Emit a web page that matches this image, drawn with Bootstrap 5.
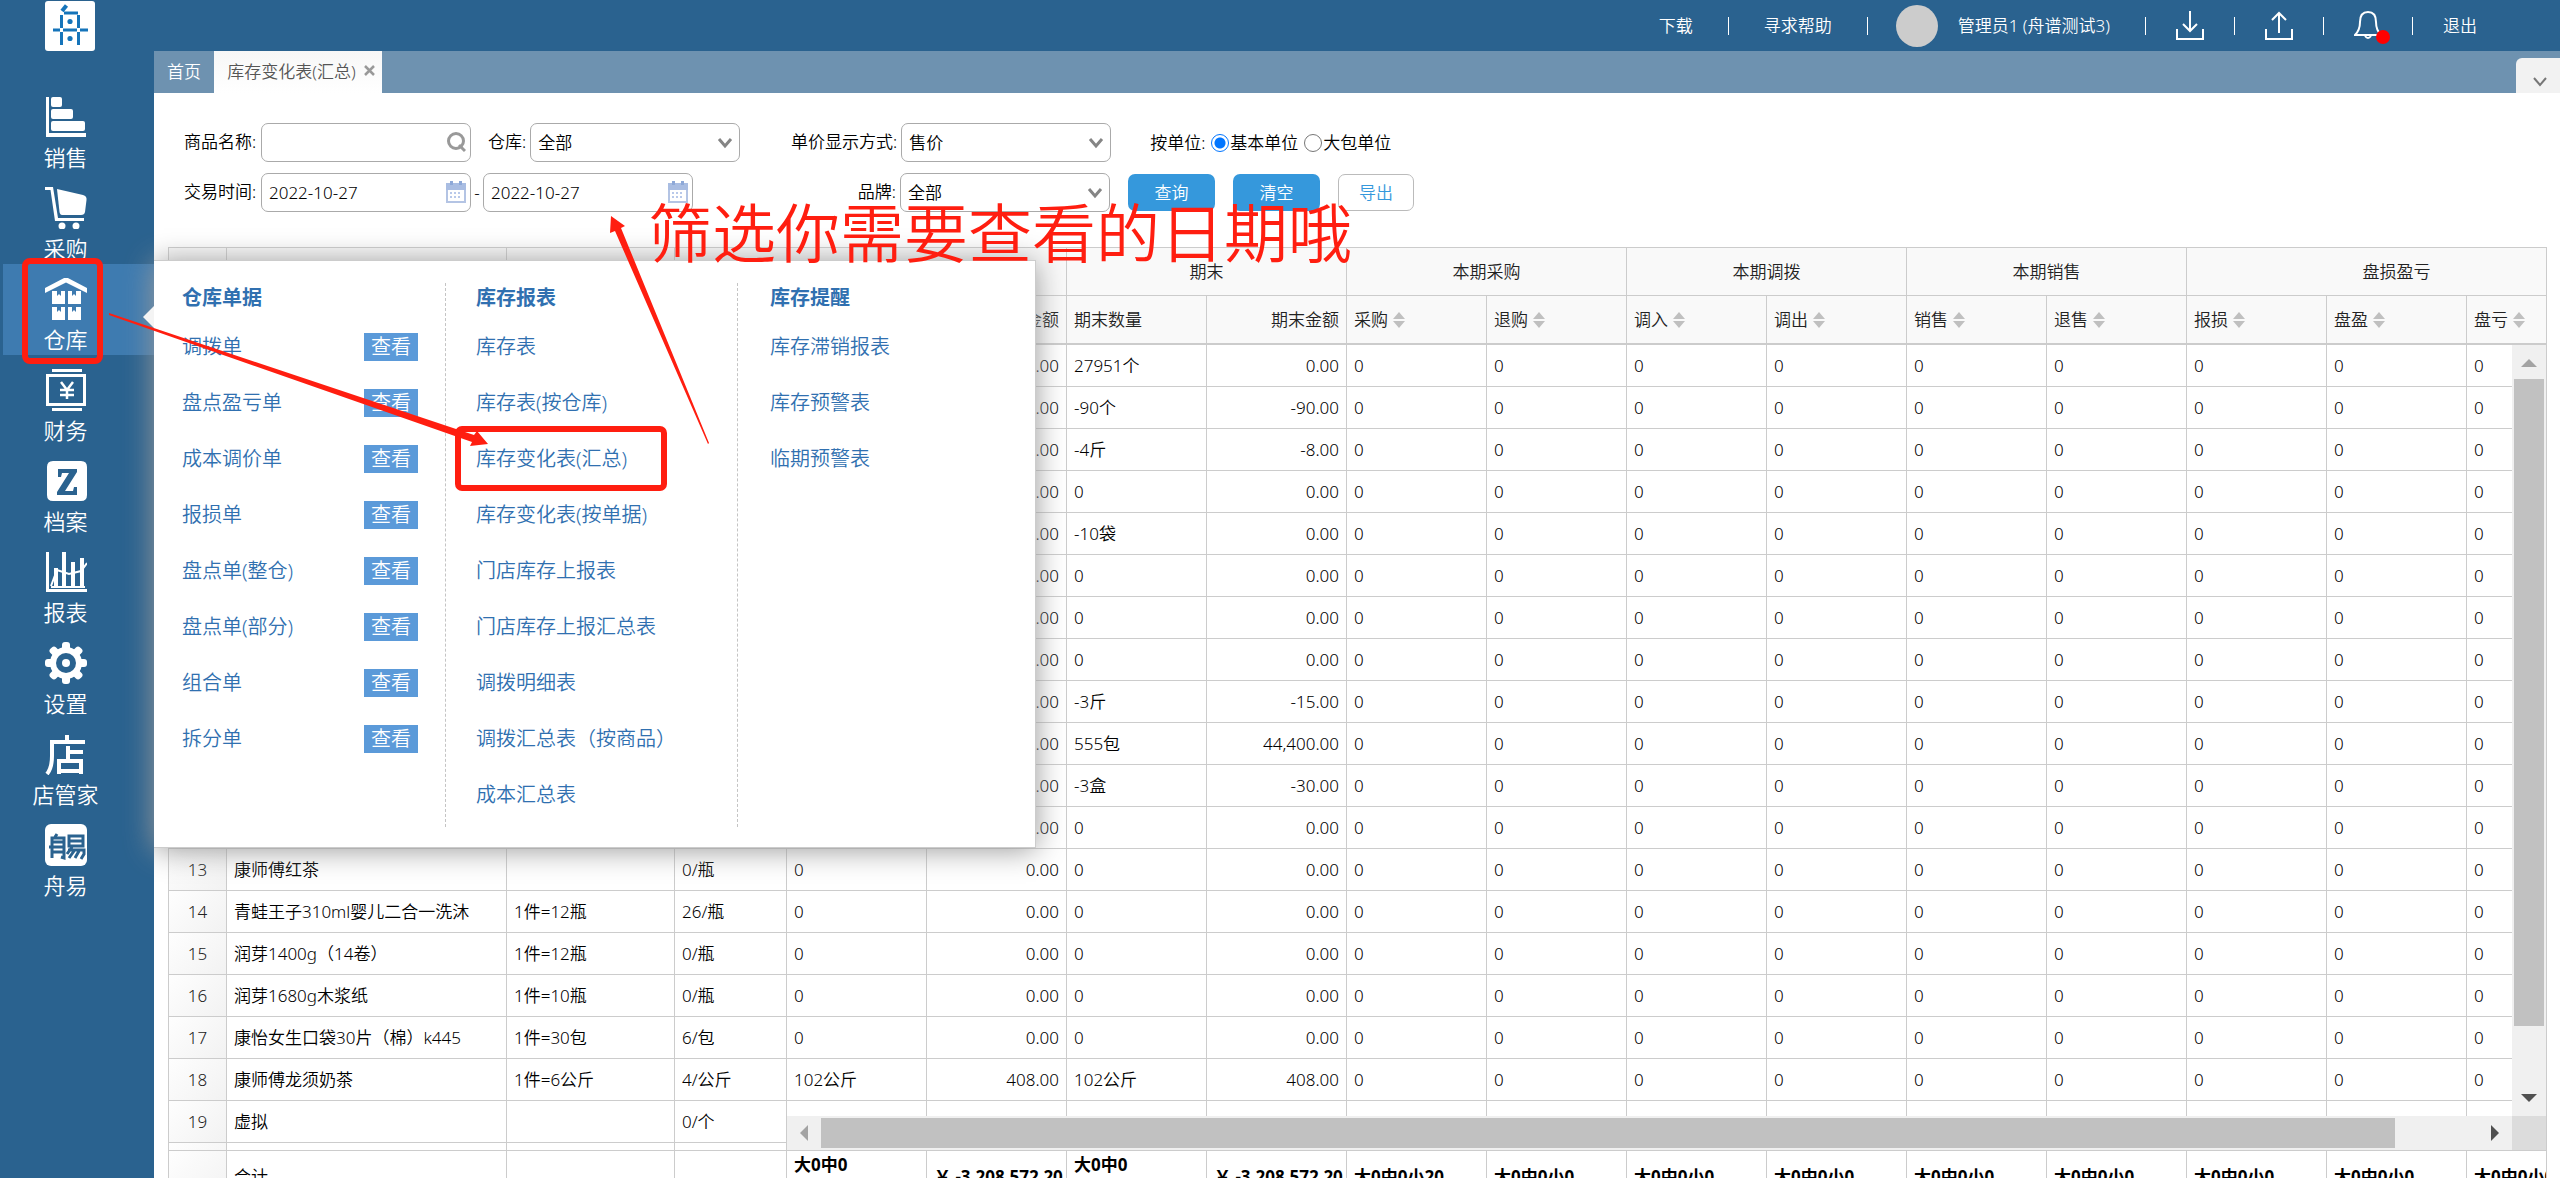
<!DOCTYPE html>
<html lang="zh-CN">
<head>
<meta charset="utf-8">
<meta name="viewport" content="width=device-width, initial-scale=1">
<title>库存变化表(汇总)</title>
<link href="https://cdn.jsdelivr.net/npm/bootstrap@5.3.0/dist/css/bootstrap.min.css" rel="stylesheet">
<style>
  :root { --navy: #2a628f; --line: #ccc; --link: #3070b0; --mark-red: #ff1e10; }
  body { font-family: "Noto Sans", "Noto Sans CJK SC", sans-serif; font-size: 17px; line-height: 24px; font-weight: 350; color: #000; background: #fff; }
  a { text-decoration: none; }

  .side { width: 154px; background: var(--navy); }
  .side-logo { height: 82px; padding: 1px 0 0 45px; }
  .side-item { height: 91px; margin-left: 3px; padding: 14px 26px 0 0; color: #fff; font-size: 22px; line-height: 30px; }
  .side-item.active { background: #3e7bb0; }
  .side-item svg { width: 42px; height: 42px; margin-bottom: 4px; fill: #fff; }

  .topbar { height: 51px; background: var(--navy); padding-right: 83px; }
  .topbar a { color: #fff; }
  .topbar .sep { width: 1px; height: 18px; background: #fff; margin: 0 30px; }
  .topbar .sep-wide { margin-left: 35px; }
  .topbar .sep-even { margin: 0 35px; }
  .topbar .avatar { width: 42px; height: 42px; background: #ccc; margin: 0 20px 0 -2px; }
  .topbar svg { display: block; fill: none; stroke: #fff; stroke-width: 2; }
  .bell-dot { width: 14px; height: 14px; background: #f00; right: -8px; bottom: -3px; }

  .tabbar { height: 42px; background: #6e92b0; }
  .tab-home { width: 60px; color: #fff; }
  .tab-now { width: 168px; padding-left: 6px; color: #555; background: linear-gradient(#f7f7f7, #fff); }
  .tab-more { width: 44px; height: 35px; background: #f2f2f2; border: 0; border-radius: 6px 0 0 0; padding: 12px 0 0 4px; }

  .filters { padding: 30px 0 0 30px; }
  .filters .line { height: 39px; margin-bottom: 11px; }
  .filters label { line-height: 24px; padding-bottom: 2px; margin-right: 4px; }
  .box { width: 210px; height: 39px; padding: 0 7px; font-size: 17px; font-weight: 350; color: #000; background-color: #fff; border: 1px solid #aaa; border-radius: 7px; }
  select.box { background-image: url("data:image/svg+xml,%3Csvg xmlns='http://www.w3.org/2000/svg' width='16' height='12' fill='none' stroke='%23858585' stroke-width='3'%3E%3Cpath d='M2 2l6 7 6-7'/%3E%3C/svg%3E"); background-size: 16px 12px; background-position: right 6px center; }
  .box-icon { right: 5px; top: 8px; pointer-events: none; }
  .filters .lab-first { width: 73px; }
  .lab-a { margin-left: 17px; }
  .lab-price { width: 157px; text-align: right; }
  .lab-brand { width: 203px; text-align: right; }
  .dash { width: 12px; text-align: center; }
  .unit-set { margin-left: 39px; }
  .unit-set input { width: 18px; height: 18px; margin: 0 1px 0 2px; }
  .unit-set .form-check-input { border-color: #777; }
  .unit-set .form-check-input:checked { background-color: #fff; border-color: #0075ff; background-image: radial-gradient(circle, #0075ff 5px, #fff 6px); }
  .cmd { height: 37px; font-size: 17px; font-weight: 350; padding: 0; border-radius: 7px; width: 87px; margin-left: 18px; }
  .cmd-fill, .cmd-fill:hover { background: #3598dc; color: #fff; }
  .cmd-line { width: 76px; background: #fff; color: #3598dc; border: 1px solid #bbb; }

  .grid { margin: 35px 13px 0 14px; border: 1px solid var(--line); border-bottom: 0; min-height: 0; }
  .grid table { table-layout: fixed; width: 2438px; border-collapse: separate; border-spacing: 0; }
  .grid th, .grid td { border: solid var(--line); border-width: 0 1px 1px 0; padding: 0 7px; white-space: nowrap; overflow: hidden; font-weight: 350; }
  .grid td { height: 42px; }
  .grid thead th { background: #f9f9f9; color: #222; }
  .grid thead tr:first-child th { height: 48px; }
  .grid thead tr:last-child th { height: 49px; border-bottom-width: 2px; }
  .grid tbody th, .grid tfoot th { text-align: center; background: linear-gradient(135deg, #fefefe, #f2f2f2); color: #222; }
  .sums { flex: 0 0 28px; border-top: 1px solid var(--line); }
  .sums td { height: 52px; font-weight: 700; }
  .sums td.plain { font-weight: 350; }
  .sort { width: 12px; height: 16px; margin-left: 5px; fill: #c0c0c0; vertical-align: -2px; }

  .bar-v { top: 0; right: 0; bottom: 34px; width: 34px; background: #f0f0f0; }
  .bar-h { left: 618px; right: 34px; bottom: 0; height: 34px; background: #f0f0f0; }
  .bar-v .thumb { background: #c1c1c1; margin: 0 2px; height: 92%; }
  .bar-h .thumb { background: #c1c1c1; margin: 2px 0; width: 95%; }
  .bar-corner { right: 0; bottom: 0; width: 34px; height: 34px; background: #dcdcdc; }
  .bar-v svg, .bar-h svg { flex: none; width: 34px; height: 34px; }

  .flyout { left: 154px; top: 260px; width: 882px; height: 588px; padding: 22px 0 20px; background: #fff; border: 1px solid #ccc; border-left: 0; box-shadow: 0 2px 28px #999; font-size: 20px; z-index: 5; }
  .flyout::before { content: ""; position: absolute; left: -11px; top: 45px; border: solid transparent; border-width: 11px 11px 11px 0; border-right-color: #f4f4f4; }
  .flyout-col { width: 292px; padding: 0 27px 0 28px; border-right: 1px dashed #c4c4c4; }
  .flyout-col + .flyout-col { padding-left: 30px; }
  .flyout-col:last-child { border: 0; padding-left: 32px; }
  .flyout-col h2 { font-size: 20px; line-height: 30px; font-weight: 700; color: var(--link); margin: 0 0 6px; }
  .flyout-col li { height: 56px; }
  .flyout-col li a { color: var(--link); }
  .flyout-col li .view { width: 54px; line-height: 28px; color: #fff; background: #5b9ad9; text-align: center; }

  .notes { inset: 0; z-index: 6; pointer-events: none; }
  .notes svg { fill: var(--mark-red); }
  .note-text { left: 648px; top: 193px; font-size: 64px; line-height: 80px; color: var(--mark-red); white-space: nowrap; }
</style>
<script src="https://cdn.jsdelivr.net/npm/bootstrap@5.3.0/dist/js/bootstrap.bundle.min.js"></script>
</head>
<body class="vh-100 overflow-hidden d-flex position-relative">

<nav class="side flex-shrink-0">
  <div class="side-logo">
    <svg width="50" height="50" viewBox="0 0 50 50"><rect width="50" height="50" rx="3" fill="#fff"/>
      <g stroke="#1574ba" stroke-width="3" fill="none"><path d="M21.500 4.500l-4.500 5.500" stroke-width="4"/><path d="M19 12h14"/><path d="M16.500 14v13M33.500 14v13M16.500 31v13M33.500 31v13"/><path d="M8 29h7M18 29h14M35 29h8"/></g>
      <circle cx="25" cy="20.500" r="2.600" fill="#1574ba"/><circle cx="25" cy="37.500" r="2.600" fill="#1574ba"/></svg>
  </div>
  <a href="#" class="side-item d-flex flex-column align-items-center"><svg viewBox="0 0 42 42"><path d="M1 1h3v36h37v4H1z"/><rect x="6" y="1" width="11" height="10" rx="2"/><rect x="6" y="13" width="22" height="10" rx="2"/><rect x="6" y="25" width="34" height="10" rx="2"/></svg>销售</a>
  <a href="#" class="side-item d-flex flex-column align-items-center"><svg viewBox="0 0 42 42"><path d="M0 0h8l5 31h26v3H10L5.500 3H0z"/><path d="M12 2l26 6q4 1 3.500 5l-1.500 12q-.5 3-4 3H17q-2 0-2.500-3z"/><circle cx="17" cy="39" r="3.500"/><circle cx="31" cy="39" r="3.500"/></svg>采购</a>
  <a href="#" class="side-item active d-flex flex-column align-items-center"><svg viewBox="0 0 42 42"><path d="M21-1l21 11v5L21 4.500 0 15v-5z"/><path d="M7 13h5v5l2-2 2 2v-5h4v13H7zM23 13h4v5l2-2 2 2v-5h5v13H23zM7 29h5v5l2-2 2 2v-5h4v14H7zM23 29h4v5l2-2 2 2v-5h5v14H23z"/></svg>仓库</a>
  <a href="#" class="side-item d-flex flex-column align-items-center"><svg viewBox="0 0 42 42"><path d="M7 0h30v3H7zM7 39h30v3H7z"/><path d="M1 5h40v32H1zM4 8v26h34V8z" fill-rule="evenodd"/><path d="M16 13l6 8 6-8M15 21h14M15 26h14M22 21v9" fill="none" stroke="#fff" stroke-width="2.500"/></svg>财务</a>
  <a href="#" class="side-item d-flex flex-column align-items-center"><svg viewBox="0 0 42 42"><path fill-rule="evenodd" d="M8 1h28q6 0 6 6v28q0 6-6 6H8q-6 0-6-6V7q0-6 6-6zM13 9v8h3l1-4h7L12 32v3h20v-8h-3l-1 4h-8L32 12V9z"/></svg>档案</a>
  <a href="#" class="side-item d-flex flex-column align-items-center"><svg viewBox="0 0 42 42"><path d="M1 1h3v37h38v3H1z"/><path d="M9 17h4v18H9zM17 1h4v34h-4zM26 11h4v24h-4zM35 7h4v28h-4z"/><path d="M6 35l6-16 12 4 12-3 6-8M6 36h34" fill="none" stroke="#fff" stroke-width="2"/></svg>报表</a>
  <a href="#" class="side-item d-flex flex-column align-items-center"><svg viewBox="0 0 42 42"><rect x="17" y="0" width="8" height="42" rx="3"/><rect x="17" y="0" width="8" height="42" rx="3" transform="rotate(45 21 21)"/><rect x="17" y="0" width="8" height="42" rx="3" transform="rotate(90 21 21)"/><rect x="17" y="0" width="8" height="42" rx="3" transform="rotate(135 21 21)"/><circle cx="21" cy="21" r="16"/><circle cx="21" cy="21" r="10" fill="#2a628f"/><circle cx="21" cy="21" r="4"/></svg>设置</a>
  <a href="#" class="side-item d-flex flex-column align-items-center"><svg viewBox="0 0 42 42"><g fill="none" stroke="#fff" stroke-width="4"><path d="M22 2v6M5 9h35M7 9v14q0 12-5 18M23 13v14M23 19h15M14 41V28h22v13M14 38h22"/></g></svg>店管家</a>
  <a href="#" class="side-item d-flex flex-column align-items-center"><svg viewBox="0 0 42 42"><rect width="42" height="42" rx="6"/><g fill="none" stroke="#2a628f" stroke-width="3"><path d="M12 10l-2 3M7 34V14h12v20l-3-1M4 23h16M7 18h12M7 28h12M24 12h14v10H24zM24 17h14M23 26h16v4l-3 5M27 23l-5 7M29 27l-5 7M34 27l-4 7"/></g></svg>舟易</a>
</nav>

<div class="flex-grow-1 d-flex flex-column" style="min-width:0">
  <header class="topbar flex-shrink-0 d-flex align-items-center justify-content-end">
    <a href="#">下载</a><span class="sep sep-even"></span>
    <a href="#">寻求帮助</a><span class="sep sep-wide"></span>
    <span class="avatar rounded-circle"></span><a href="#">管理员1 (舟谱测试3)</a><span class="sep sep-wide"></span>
    <a href="#" aria-label="导入"><svg width="28" height="30" viewBox="0 0 28 30"><path d="M14 0v20M7 13l7 7 7-7M1 18v10h26V18"/></svg></a><span class="sep"></span>
    <a href="#" aria-label="上传"><svg width="28" height="30" viewBox="0 0 28 30"><path d="M14 22V2M7 9l7-7 7 7M1 18v10h26V18"/></svg></a><span class="sep"></span>
    <a href="#" class="position-relative" aria-label="通知"><svg width="28" height="30" viewBox="0 0 28 30"><path d="M14 1c-6 0-8 5-8 10 0 7-2 10-5 13h26c-3-3-5-6-5-13 0-5-2-10-8-10zM11 25q3 4 6 0"/></svg><span class="bell-dot position-absolute rounded-circle"></span></a><span class="sep"></span>
    <a href="#">退出</a>
  </header>

  <div class="tabbar flex-shrink-0 d-flex">
    <a href="#" class="tab-home d-flex align-items-center justify-content-center">首页</a>
    <a href="#" class="tab-now d-flex align-items-center justify-content-center">库存变化表(汇总)
      <svg class="ms-2 mb-1" width="11" height="11" viewBox="0 0 11 11" fill="none" stroke="#999" stroke-width="2.500"><path d="M1 1l9 9M10 1l-9 9"/></svg></a>
    <button class="tab-more ms-auto mt-auto" aria-label="更多"><svg class="d-block mx-auto" width="16" height="12" fill="none" stroke="#777" stroke-width="2"><path d="M2 2l6 7 6-7"/></svg></button>
  </div>

  <form class="filters flex-shrink-0">
    <div class="line d-flex align-items-center">
      <label for="goods" class="lab-first">商品名称:</label>
      <div class="position-relative"><input id="goods" type="text" class="box"><svg class="box-icon position-absolute" width="20" height="22" fill="none" stroke="#999" stroke-width="3"><circle cx="10" cy="10" r="7.500"/><path d="M13 14l6 6"/></svg></div>
      <label for="store" class="lab-a">仓库:</label>
      <select id="store" class="form-select box"><option>全部</option></select>
      <label for="price" class="lab-price">单价显示方式:</label>
      <select id="price" class="form-select box"><option>售价</option></select>
      <div class="unit-set d-flex align-items-center">
        <span class="me-1">按单位:</span>
        <input class="form-check-input" type="radio" name="unit" id="u1" checked><label for="u1" class="pb-0">基本单位</label>
        <input class="form-check-input" type="radio" name="unit" id="u2"><label for="u2" class="pb-0">大包单位</label>
      </div>
    </div>
    <div class="line d-flex align-items-center mb-0">
      <label for="from" class="lab-first">交易时间:</label>
      <div class="position-relative"><input id="from" type="text" class="box" value="2022-10-27"><svg class="box-icon position-absolute" width="20" height="22"><use href="#cal"/></svg></div>
      <span class="dash">-</span>
      <div class="position-relative"><input aria-label="结束日期" type="text" class="box" value="2022-10-27"><svg class="box-icon position-absolute" width="20" height="22"><use href="#cal"/></svg></div>
      <label for="brand" class="lab-brand">品牌:</label>
      <select id="brand" class="form-select box"><option>全部</option></select>
      <button type="button" class="btn cmd cmd-fill">查询</button>
      <button type="button" class="btn cmd cmd-fill">清空</button>
      <button type="button" class="btn cmd cmd-line">导出</button>
    </div>
  </form>

  <div class="grid flex-grow-1 d-flex flex-column overflow-hidden">
    <div class="overflow-hidden flex-shrink-0"><table id="head"></table></div>
    <div class="overflow-hidden flex-grow-1 position-relative" style="min-height:0">
      <table id="rows"></table>
      <div class="bar-v position-absolute d-flex flex-column"><svg viewBox="0 0 34 34"><path d="M17 14l8 8H9z" fill="#a3a3a3"/></svg><div class="flex-grow-1"><div class="thumb"></div></div><svg viewBox="0 0 34 34"><path d="M17 20l8-8H9z" fill="#505050"/></svg></div>
      <div class="bar-h position-absolute d-flex"><svg viewBox="0 0 34 34"><path d="M13 17l8-8v16z" fill="#a3a3a3"/></svg><div class="flex-grow-1 d-flex"><div class="thumb"></div></div><svg viewBox="0 0 34 34"><path d="M21 17l-8-8v16z" fill="#505050"/></svg></div>
      <div class="bar-corner position-absolute"></div>
    </div>
    <div class="sums overflow-hidden"><table id="foot"></table></div>
  </div>
</div>

<div class="flyout position-absolute d-flex" id="flyout"></div>

<div class="notes position-absolute">
  <svg class="position-absolute top-0 start-0" width="1100" height="520">
    <g fill="none" stroke="#ff1e10" stroke-width="6"><rect x="25" y="261" width="75" height="100" rx="5"/><rect x="458" y="429" width="206" height="59" rx="4"/></g>
    <path d="M109 313L474 435L477 431L488 444L470 446L472 442L109 315z"/>
    <path d="M708 444L615 231L610 233L611 216L625 226L621 228L709 443z"/>
  </svg>
  <div class="note-text position-absolute">筛选你需要查看的日期哦</div>
</div>

<svg class="d-none"><symbol id="cal" viewBox="0 0 20 22"><path d="M1 3h18v18H1z" fill="#fff" stroke="#b4c4e4" stroke-width="2"/><path d="M0 2h20v7H0z" fill="#a9bde2"/><path d="M4 0h3v4H4zM13 0h3v4h-3z" fill="#8ea9d8"/><path d="M4 12h12M4 16h12" stroke="#b9c9ea" stroke-width="2" stroke-dasharray="2 2"/></symbol></svg>

<script>
  // Column widths: index, name, pack, price, then the figure columns
  const cols = '<colgroup>' + [58, 280, 168, 112].concat(Array(13).fill(140)).map(w => `<col style="width:${w}px">`).join('') + '</colgroup>';
  const sort = '<svg class="sort" viewBox="0 0 12 16"><path d="M6 0l6 7H0zM6 16l6-7H0z"/></svg>';
  const groups = [['', 2], ['期末', 2], ['本期采购', 2], ['本期调拨', 2], ['本期销售', 2], ['盘损盈亏', 3]];
  const moves = ['采购', '退购', '调入', '调出', '销售', '退售', '报损', '盘盈', '盘亏'];
  head.innerHTML = cols + '<thead><tr><th></th><th></th><th></th><th></th>' +
    groups.map(g => `<th colspan="${g[1]}" class="text-center">${g[0]}</th>`).join('') + '</tr><tr><th></th><th></th><th></th><th></th>' +
    '<th></th><th class="text-end">期初金额</th><th>期末数量</th><th class="text-end">期末金额</th>' +
    moves.map(m => `<th>${m}${sort}</th>`).join('') + '</tr></thead>';

  // name, pack, price, opening qty, opening sum, closing qty, closing sum
  const e = (q, s) => ['', '', '', '', '0.00', q, s];
  const data = [
    e('27951个', '0.00'), e('-90个', '-90.00'), e('-4斤', '-8.00'), e('0', '0.00'), e('-10袋', '0.00'), e('0', '0.00'),
    e('0', '0.00'), e('0', '0.00'), e('-3斤', '-15.00'), e('555包', '44,400.00'), e('-3盒', '-30.00'), e('0', '0.00'),
    ['康师傅红茶', '', '0/瓶', '0', '0.00', '0', '0.00'],
    ['青蛙王子310ml婴儿二合一洗沐', '1件=12瓶', '26/瓶', '0', '0.00', '0', '0.00'],
    ['润芽1400g（14卷）', '1件=12瓶', '0/瓶', '0', '0.00', '0', '0.00'],
    ['润芽1680g木浆纸', '1件=10瓶', '0/瓶', '0', '0.00', '0', '0.00'],
    ['康怡女生口袋30片（棉）k445', '1件=30包', '6/包', '0', '0.00', '0', '0.00'],
    ['康师傅龙须奶茶', '1件=6公斤', '4/公斤', '102公斤', '408.00', '102公斤', '408.00'],
    ['虚拟', '', '0/个', '0', '0.00', '0', '0.00']
  ];
  rows.innerHTML = cols + '<tbody>' + data.map((r, i) => `<tr><th>${i < 12 ? '' : i + 1}</th>` +
    r.map((v, k) => `<td${k === 4 || k === 6 ? ' class="text-end"' : ''}>${v}</td>`).join('') + '<td>0</td>'.repeat(9) + '</tr>').join('') +
    '<tr><th></th>' + '<td></td>'.repeat(16) + '</tr></tbody>';

  const sum = '<td>大0中0<br>小0</td><td>￥ -3,208,572.20</td>';
  foot.innerHTML = cols + '<tfoot><tr><th></th><td class="plain">合计</td><td></td><td></td>' + sum + sum +
    '<td>大0中0小20</td>' + '<td>大0中0小0</td>'.repeat(8) + '</tr></tfoot>';

  const menu = [
    ['仓库单据', ['调拨单', '盘点盈亏单', '成本调价单', '报损单', '盘点单(整仓)', '盘点单(部分)', '组合单', '拆分单'], true],
    ['库存报表', ['库存表', '库存表(按仓库)', '库存变化表(汇总)', '库存变化表(按单据)', '门店库存上报表', '门店库存上报汇总表', '调拨明细表', '调拨汇总表（按商品）', '成本汇总表']],
    ['库存提醒', ['库存滞销报表', '库存预警表', '临期预警表']]
  ];
  flyout.innerHTML = menu.map(m => `<div class="flyout-col"><h2>${m[0]}</h2><ul class="list-unstyled m-0">` +
    m[1].map(t => `<li class="d-flex align-items-center justify-content-between"><a href="#">${t}</a>${m[2] ? '<a href="#" class="view">查看</a>' : ''}</li>`).join('') + '</ul></div>').join('');
</script>
</body>
</html>
